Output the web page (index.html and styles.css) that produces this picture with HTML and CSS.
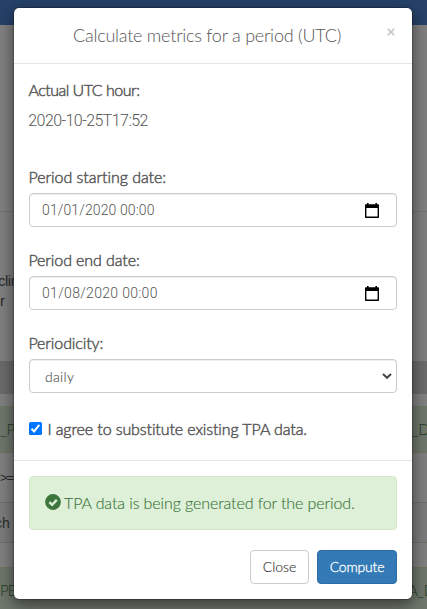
FILE: index.html
```html
<!DOCTYPE html>
<html lang="en">
<head>
<meta charset="utf-8">
<title>Calculate metrics</title>
<link rel="stylesheet" href="styles.css">
</head>
<body>
<div class="page">
  <div class="navbar"></div>
  <div class="intro"></div>
  <div class="summary"><p>clin<br>r</p></div>
  <div class="band"></div>
  <div class="row success first"><span class="left">_P</span><span class="right">_DA</span></div>
  <div class="row plain"><span class="left">&gt;=</span></div>
  <div class="row note"><span class="left">ch <i>t</i></span></div>
  <div class="gap"></div>
  <div class="row success last"><span class="left">PE</span><span class="right">A_D</span></div>
</div>
<div class="modal">
  <header class="modal-header">
    <h4 class="title">Calculate metrics for a period (UTC)</h4>
    <svg class="dismiss" viewBox="0 0 8 8"><path d="M.9.9l6.2 6.2M7.1.9L.9 7.1"/></svg>
  </header>
  <div class="modal-body">
    <div class="group hour">
      <label class="label tight">Actual UTC hour:</label>
      <p class="now">2020-10-25T17:52</p>
    </div>
    <div class="group">
      <label class="label start">Period starting date:</label>
      <div class="control"><span class="date">01/01/2020 00:00</span>
        <svg class="calendar" viewBox="0 0 14 15"><path fill-rule="evenodd" d="M2 0h1.6v1.2h6.8V0H12v1.2h1c.6 0 1 .4 1 1V14c0 .6-.4 1-1 1H1c-.6 0-1-.4-1-1V2.2c0-.6.4-1 1-1h1zM1.4 5v8.6h11.2V5z"/></svg></div>
    </div>
    <div class="group">
      <label class="label">Period end date:</label>
      <div class="control"><span class="date wide">01/08/2020 00:00</span>
        <svg class="calendar" viewBox="0 0 14 15"><path fill-rule="evenodd" d="M2 0h1.6v1.2h6.8V0H12v1.2h1c.6 0 1 .4 1 1V14c0 .6-.4 1-1 1H1c-.6 0-1-.4-1-1V2.2c0-.6.4-1 1-1h1zM1.4 5v8.6h11.2V5z"/></svg></div>
    </div>
    <div class="group">
      <label class="label">Periodicity:</label>
      <div class="control select"><span class="daily">daily</span>
        <svg class="chevron" viewBox="0 0 10 6"><path d="M1 1l4 3.8L9 1"/></svg></div>
    </div>
    <div class="agree">
      <svg class="checkbox" viewBox="0 0 13 13"><rect width="13" height="13" rx="1.5"/><path d="M2.5 6.8l2.6 2.6 5.2-6.5"/></svg>
      <label class="label">I agree to substitute existing TPA data.</label>
    </div>
  </div>
  <footer class="modal-footer">
    <div class="alert">
      <svg class="ok" viewBox="0 0 16 16"><circle cx="8" cy="8" r="7.9"/><path d="M4.4 8.1l2.7 2.7 4.7-4.9"/></svg>
      <span class="message">TPA data is being generated for the period.</span>
    </div>
    <div class="actions">
      <button class="btn">Close</button>
      <button class="btn primary">Compute</button>
    </div>
  </footer>
</div>
</body>
</html>
```
FILE: styles.css
```css
* { box-sizing: border-box; }
body { margin: 0; height: 609px; overflow: hidden; font: 300 16px/23px Lato, "Liberation Sans", sans-serif; color: #555; }
h4, p { margin: 0; font-weight: 300; }
svg { display: block; flex: none; }

.page { height: 609px; overflow: hidden; background: #808080; color: #2b2b2b; }
.navbar { height: 25px; background: #264269; }
.intro { height: 187px; border-bottom: 1px solid #747474; }
.summary { height: 149px; padding-top: 59px; font: 15px/20px "Liberation Sans", sans-serif; letter-spacing: -.5px; }
.summary p { text-indent: -2px; font-weight: 400; }
.band { height: 33px; margin-bottom: 12px; background: #6b6b6b; }
.row { display: flex; justify-content: space-between; align-items: center; font-size: 15px; }
.left, .right { white-space: nowrap; }
.left i { font-style: normal; color: #695222; }
.right { width: 15px; letter-spacing: -.4px; }
.success { height: 47px; background: #6f776c; border: solid #6b7763; border-width: 1px 0; color: #1e3a1f; }
.first .left { letter-spacing: -.3px; }
.last .left { letter-spacing: -1px; }
.last .right { width: 19px; }
.plain { height: 50px; border-bottom: 1px solid #6e6e6e; }
.plain .left { font: 13px "Liberation Sans", sans-serif; letter-spacing: -1px; }
.note { height: 40px; background: #7c7c7c; border-bottom: 1px solid #6b7063; }
.note .left { margin-left: -5px; font: 14px "Liberation Sans", sans-serif; }
.gap { height: 24px; }

.modal { position: absolute; left: 13px; top: 7px; width: 400px; height: 593px; background: #fff; background-clip: padding-box; border: 1px solid rgba(0, 0, 0, .2); border-radius: 6px; box-shadow: 0 5px 15px rgba(0, 0, 0, .5); }
.modal-header { display: flex; justify-content: flex-end; height: 56px; padding: 15px; border-bottom: 1px solid #e5e5e5; }
.title { flex: 1; padding-left: 44px; font-size: 18px; line-height: 25px; letter-spacing: -.24px; white-space: nowrap; }
.dismiss { width: 8px; height: 8px; margin: 5px 2px 0 0; fill: none; stroke: #c8c8c8; stroke-width: 1.8; }
.modal-body { height: 396px; padding: 15px; }
.group { height: 83px; }
.hour { height: 86px; }
.label { display: block; height: 31px; margin-left: -.6px; line-height: 23px; letter-spacing: -.1px; -webkit-text-stroke: .5px #5c5c5c; }
.tight { line-height: 21px; letter-spacing: -.5px; }
.start { letter-spacing: -.04px; }
.now { margin-left: -.7px; font-family: Roboto, sans-serif; letter-spacing: -.57px; line-height: 21px; }
.control { display: flex; align-items: center; justify-content: space-between; height: 34px; margin-top: -3px; padding: 0 17px 0 12px; border: 1px solid #ccc; border-radius: 4px; box-shadow: inset 0 1px 1px rgba(0, 0, 0, .075); font-size: 14px; }
.date { font-family: Roboto, sans-serif; letter-spacing: .12px; }
.wide { letter-spacing: .32px; }
.calendar { width: 14px; height: 15px; fill: #000; }
.select { padding: 0 4px 0 15px; }
.daily { letter-spacing: .3px; -webkit-text-stroke: .15px #555; }
.chevron { width: 10px; height: 6px; fill: none; stroke: #444; stroke-width: 2; }
.agree { display: flex; gap: 6px; padding-top: 3px; }
.checkbox { width: 13px; height: 13px; margin-top: 5px; fill: #0075ff; }
.checkbox path { fill: none; stroke: #fff; stroke-width: 2; }
.modal-footer { padding: 15px; border-top: 1px solid #e5e5e5; }
.alert { display: flex; align-items: center; gap: 3px; height: 54px; padding: 0 15px; background: #dff0d8; border: 1px solid #d6e9c6; border-radius: 4px; color: #3c763d; letter-spacing: -.1px; white-space: nowrap; }
.message { padding-bottom: 2px; -webkit-text-stroke: .15px #3c763d; }
.ok { width: 16px; height: 16px; margin-top: -3px; fill: #3c763d; }
.ok path { fill: none; stroke: #dff0d8; stroke-width: 2.4; }
.actions { display: flex; justify-content: flex-end; gap: 8px; margin-top: 20px; }
.btn { width: 59px; height: 34px; padding: 0; border: 1px solid #ccc; border-radius: 4px; background: #fff; color: #333; font: 300 14px/20px Lato, sans-serif; -webkit-text-stroke: .15px #333; }
.primary { width: 80px; border-color: #2e6da4; background: #337ab7; color: #fff; letter-spacing: -.2px; -webkit-text-stroke: .3px #fff; }
```
